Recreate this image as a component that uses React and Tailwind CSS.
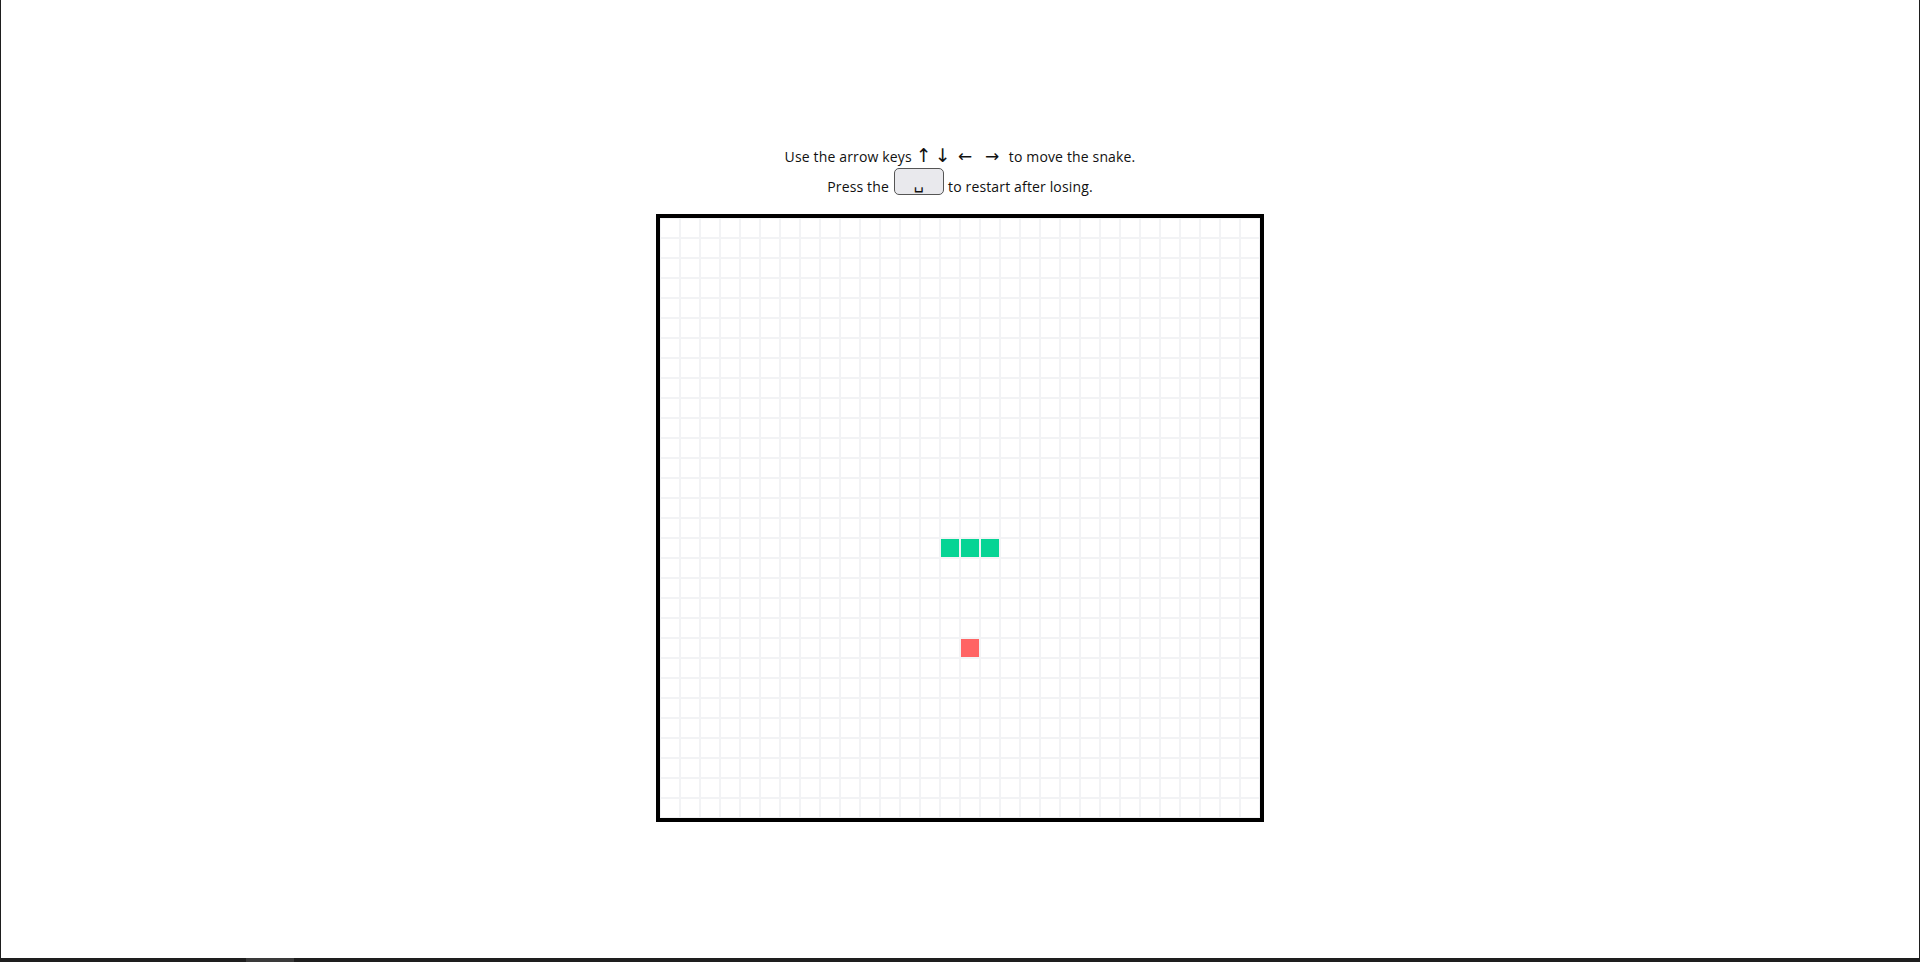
import React from "react";

const SNAKE = new Set(["16-14", "16-15", "16-16"]);
const FOOD = "21-15";

export default function App() {
  const cells = [];
  for (let r = 0; r < 30; r++) {
    for (let c = 0; c < 30; c++) {
      const k = `${r}-${c}`;
      let bg = "bg-white";
      if (SNAKE.has(k)) bg = "bg-[#06d494]";
      else if (k === FOOD) bg = "bg-[#ff6464]";
      cells.push(<div key={k} className={`w-[20px] h-[20px] border border-[#f2f3f5] ${bg}`} />);
    }
  }
  return (
    <div className="h-[962px] w-full bg-[#1e1e1e] flex flex-col px-px">
      <div className="flex-1 bg-white flex flex-col items-center pt-[141px] text-[14px] tracking-[0.15px] text-[#111] font-['Open_Sans','Liberation_Sans',sans-serif]">
        <div className="h-[27px] flex items-baseline">
          <span>Use the arrow keys</span>
          <span className="inline-block w-[20px] text-center text-[19px] font-['DejaVu_Sans',sans-serif] ml-[2px]">↑</span>
          <span className="inline-block w-[18px] text-center text-[19px] font-['DejaVu_Sans',sans-serif]">↓</span>
          <span className="inline-block w-[27px] text-center text-[17px] font-['DejaVu_Sans',sans-serif]">←</span>
          <span className="inline-block w-[27px] text-center text-[17px] font-['DejaVu_Sans',sans-serif]">→</span>
          <span className="ml-[3px]">to move the snake.</span>
        </div>
        <div className="h-[27px] flex items-end">
          <span className="leading-[19px] mb-[-1px]">Press the</span>
          <span className="ml-[5px] mr-[4px] w-[50px] h-[27px] rounded-[5px] border border-[#555] bg-[#e9e9ed] flex items-end justify-center pb-[2px] text-[16px] leading-none font-['DejaVu_Sans',sans-serif]">␣</span>
          <span className="leading-[19px] mb-[-1px]">to restart after losing.</span>
        </div>
        <div className="mt-[19px] w-[608px] h-[608px] border-4 border-black grid grid-cols-[repeat(30,20px)] grid-rows-[repeat(30,20px)]">
          {cells}
        </div>
      </div>
      <div className="h-[4px] flex">
        <div className="ml-[245px] w-[48px] h-full bg-[#3a3a3a]" />
      </div>
    </div>
  );
}
